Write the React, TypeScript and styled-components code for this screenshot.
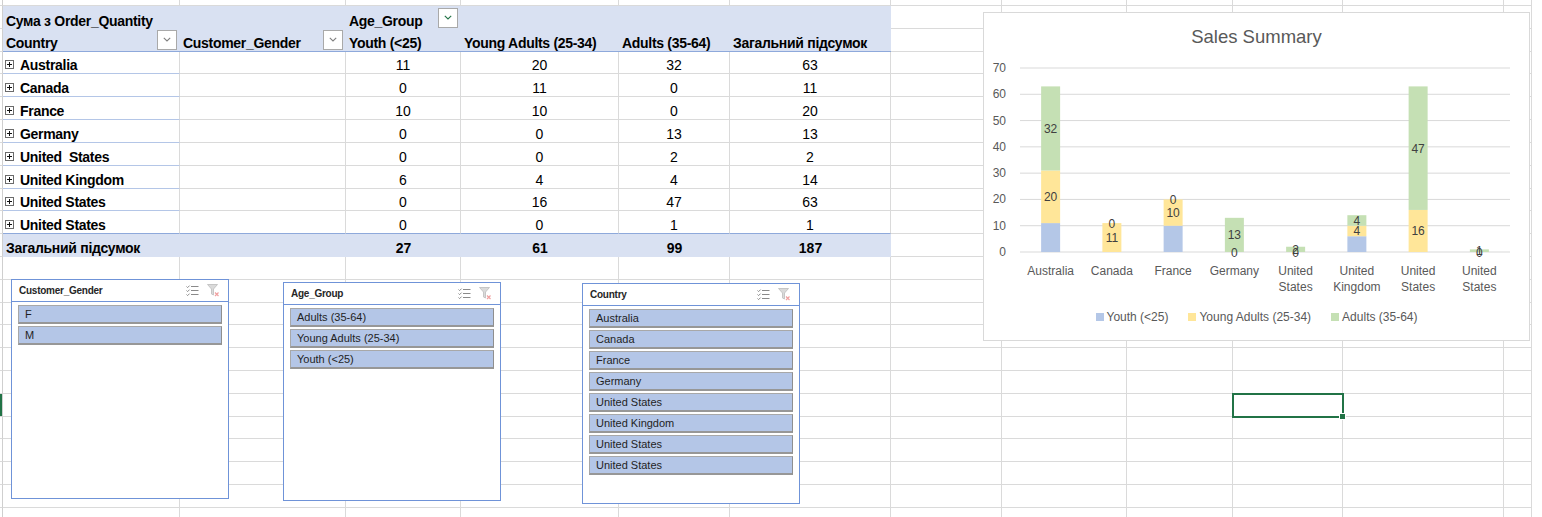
import React from 'react';
import styled, { createGlobalStyle, css } from 'styled-components';

const GlobalStyle = createGlobalStyle`
  html, body { margin: 0; padding: 0; background: #fff; }
  body { font-family: "Liberation Sans", Arial, sans-serif; }
  #root { width: 1542px; height: 517px; overflow: hidden; }
`;

const GRID = '#dadada';
const HEAD_BG = '#d9e1f2';
const HEAD_LINE = '#8ea9db';
const ROW_LINE = '#b4c6e7';
const SLICER_BLUE = '#6f93d8';

const COL_WIDTHS = [3, 177, 166, 115, 158, 111, 161, 111, 125, 106, 110, 161, 28];
const ROW_H = 22.82;

type PivotRow = { country: string; values: number[] };
const PIVOT: PivotRow[] = [
  { country: 'Australia', values: [11, 20, 32, 63] },
  { country: 'Canada', values: [0, 11, 0, 11] },
  { country: 'France', values: [10, 10, 0, 20] },
  { country: 'Germany', values: [0, 0, 13, 13] },
  { country: 'United  States', values: [0, 0, 2, 2] },
  { country: 'United Kingdom', values: [6, 4, 4, 14] },
  { country: 'United States', values: [0, 16, 47, 63] },
  { country: 'United States', values: [0, 0, 1, 1] },
];
const TOTALS = [27, 61, 99, 187];
const HEADERS = ['Youth (<25)', 'Young Adults (25-34)', 'Adults (35-64)', 'Загальний підсумок'];

/* ---------- sheet ---------- */

const Page = styled.div`
  position: relative;
  width: 1542px;
  height: 517px;
  overflow: hidden;
  background: #fff;
`;

const Sheet = styled.div`
  display: grid;
  grid-template-columns: ${COL_WIDTHS.map((w) => `${w}px`).join(' ')} 1fr;
  grid-template-rows: 6px repeat(22, ${ROW_H}px) 1fr;
  width: 100%;
  height: 100%;
  font-family: "Liberation Sans", Arial, sans-serif;
  font-size: 14px;
  line-height: 16px;
  color: #000;
`;

const Cell = styled.div<{ $noBottom?: boolean }>`
  box-sizing: border-box;
  min-width: 0;
  border-right: 1px solid ${GRID};
  border-bottom: ${(p) => (p.$noBottom ? 'none' : `1px solid ${GRID}`)};
`;

const EdgeCell = styled.div`
  background: #fff;
`;

const RowStub = styled(Cell)<{ $active?: boolean }>`
  border-right-color: #cfcfcf;
  background: ${(p) => (p.$active ? '#217346' : 'transparent')};
`;

const SelectedCell = styled(Cell)`
  position: relative;
  z-index: 1;
  outline: 2px solid #217346;
  outline-offset: -1px;
  &::after {
    content: '';
    position: absolute;
    right: -4px;
    bottom: -4px;
    width: 5px;
    height: 5px;
    background: #217346;
    border: 1px solid #fff;
  }
`;

const HeaderCell = styled.div<{ $span?: number; $underline?: boolean }>`
  box-sizing: border-box;
  min-width: 0;
  grid-column: span ${(p) => p.$span ?? 1};
  background: ${HEAD_BG};
  border-bottom: ${(p) => (p.$underline ? `1px solid ${HEAD_LINE}` : 'none')};
  display: flex;
  align-items: flex-end;
  justify-content: space-between;
  padding: 0 3px;
  font-weight: bold;
  letter-spacing: -0.3px;
  white-space: nowrap;
`;

const HeaderText = styled.span`
  padding-bottom: 0;
`;

const DropButton = styled.span`
  flex: none;
  width: 20px;
  height: 20px;
  box-sizing: border-box;
  margin-bottom: 1px;
  border: 1px solid #a9a9a9;
  background: #fff;
  display: inline-flex;
  align-items: center;
  justify-content: center;
`;

const RowLabelCell = styled.div<{ $last?: boolean }>`
  box-sizing: border-box;
  min-width: 0;
  border-right: 1px solid ${GRID};
  border-bottom: 1px solid ${(p) => (p.$last ? HEAD_LINE : ROW_LINE)};
  display: flex;
  align-items: flex-end;
  gap: 6px;
  padding-left: 2px;
  font-weight: bold;
  letter-spacing: -0.3px;
  white-space: pre;
`;

const ExpandBox = styled.span`
  flex: none;
  position: relative;
  width: 9px;
  height: 9px;
  box-sizing: border-box;
  margin-bottom: 4px;
  border: 1px solid #6b6b6b;
  &::before {
    content: '';
    position: absolute;
    left: 1px;
    right: 1px;
    top: 3px;
    height: 1px;
    background: #111;
  }
  &::after {
    content: '';
    position: absolute;
    top: 1px;
    bottom: 1px;
    left: 3px;
    width: 1px;
    background: #111;
  }
`;

const ValueCell = styled(Cell)<{ $last?: boolean }>`
  display: flex;
  align-items: flex-end;
  justify-content: center;
  ${(p) =>
    p.$last &&
    css`
      border-bottom-color: ${HEAD_LINE};
    `}
`;

const TotalCell = styled.div<{ $span?: number; $left?: boolean }>`
  box-sizing: border-box;
  min-width: 0;
  grid-column: span ${(p) => p.$span ?? 1};
  background: ${HEAD_BG};
  display: flex;
  align-items: flex-end;
  justify-content: ${(p) => (p.$left ? 'flex-start' : 'center')};
  padding-left: ${(p) => (p.$left ? '3px' : '0')};
  padding-bottom: 1px;
  font-weight: bold;
  letter-spacing: ${(p) => (p.$left ? '-0.3px' : '0')};
  white-space: nowrap;
`;

const Chevron = ({ color }: { color: string }) => (
  <svg width="8" height="5" viewBox="0 0 8 5">
    <path d="M0.8 0.8 L4 4 L7.2 0.8" fill="none" stroke={color} strokeWidth="1.1" />
  </svg>
);

/* ---------- slicers ---------- */

const Slicer = styled.div<{ $x: number; $y: number; $h: number }>`
  position: absolute;
  left: ${(p) => p.$x}px;
  top: ${(p) => p.$y}px;
  width: 218px;
  height: ${(p) => p.$h}px;
  box-sizing: border-box;
  background: #fff;
  border: 1px solid ${SLICER_BLUE};
  font-family: "Liberation Sans", Arial, sans-serif;
`;

const SlicerHeader = styled.div`
  height: 22px;
  box-sizing: border-box;
  border-bottom: 1px solid ${SLICER_BLUE};
  display: flex;
  align-items: center;
  justify-content: space-between;
  padding: 0 8px 0 7px;
`;

const SlicerTitle = styled.span`
  font-size: 10px;
  font-weight: bold;
  letter-spacing: -0.25px;
  color: #262626;
`;

const SlicerTools = styled.div`
  display: flex;
  align-items: center;
  gap: 8px;
`;

const SlicerList = styled.div`
  display: flex;
  flex-direction: column;
  gap: 2px;
  padding: 3px 6px 0;
`;

const SlicerItem = styled.div`
  height: 19px;
  box-sizing: border-box;
  display: flex;
  align-items: center;
  padding-left: 6px;
  background: #b4c6e7;
  border: 1px solid #a8a8a8;
  border-right-color: #8f8f8f;
  border-bottom: 2px solid #979797;
  font-size: 11px;
  color: #1f1f1f;
  white-space: nowrap;
`;

const MultiSelectIcon = () => (
  <svg width="13" height="12" viewBox="0 0 13 12">
    <g stroke="#8a8a8a" strokeWidth="1" fill="none">
      <path d="M0.5 1.5 L1.6 2.6 L3.6 0.6" />
      <path d="M5 1.5 H12.5" />
      <path d="M0.5 5.5 L1.6 6.6 L3.6 4.6" />
      <path d="M5 5.5 H12.5" />
      <path d="M0.5 9.5 L1.6 10.6 L3.6 8.6" />
      <path d="M5 9.5 H12.5" />
    </g>
  </svg>
);

const ClearFilterIcon = () => (
  <svg width="13" height="13" viewBox="0 0 13 13">
    <path d="M0.5 0.5 H10.5 L6.5 5 V11 L4.5 10 V5 Z" fill="#dadada" stroke="#c6c6c6" strokeWidth="1" />
    <path d="M8 8.5 L11.5 12 M11.5 8.5 L8 12" stroke="#f0a0a0" strokeWidth="1.2" />
  </svg>
);

type SlicerSpec = { title: string; x: number; y: number; h: number; items: string[] };
const SLICERS: SlicerSpec[] = [
  { title: 'Customer_Gender', x: 11, y: 279, h: 220, items: ['F', 'M'] },
  { title: 'Age_Group', x: 283, y: 282, h: 219, items: ['Adults (35-64)', 'Young Adults (25-34)', 'Youth (<25)'] },
  {
    title: 'Country',
    x: 582,
    y: 283,
    h: 221,
    items: ['Australia', 'Canada', 'France', 'Germany', 'United States', 'United Kingdom', 'United States', 'United States'],
  },
];

/* ---------- chart ---------- */

const ChartFrame = styled.div`
  position: absolute;
  left: 983px;
  top: 12px;
  width: 547px;
  height: 329px;
  box-sizing: border-box;
  border: 1px solid #d9d9d9;
  background: #fff;
  display: flex;
  flex-direction: column;
  font-family: "Liberation Sans", Arial, sans-serif;
`;

const ChartTitle = styled.div`
  height: 36px;
  box-sizing: border-box;
  padding-top: 13px;
  text-align: center;
  font-size: 18.5px;
  line-height: 22px;
  color: #595959;
`;

const Plot = styled.svg`
  display: block;
  flex: none;
`;

const AxisLabel = styled.text`
  font-family: "Liberation Sans", Arial, sans-serif;
  font-size: 12px;
  fill: #595959;
`;

const DataLabel = styled.text`
  font-family: "Liberation Sans", Arial, sans-serif;
  font-size: 12px;
  fill: #404040;
`;

const Legend = styled.div`
  display: flex;
  justify-content: center;
  gap: 20px;
  margin-top: 15px;
  font-size: 12px;
  line-height: 14px;
  color: #595959;
`;

const LegendItem = styled.div`
  display: flex;
  align-items: center;
  gap: 3px;
`;

const Swatch = styled.span<{ $color: string }>`
  width: 8px;
  height: 8px;
  background: ${(p) => p.$color};
`;

const SERIES = [
  { name: 'Youth (<25)', color: '#b4c7e7' },
  { name: 'Young Adults (25-34)', color: '#ffe699' },
  { name: 'Adults (35-64)', color: '#c5e0b4' },
];

const CHART_DATA: { label: string[]; v: number[] }[] = [
  { label: ['Australia'], v: [11, 20, 32] },
  { label: ['Canada'], v: [0, 11, 0] },
  { label: ['France'], v: [10, 10, 0] },
  { label: ['Germany'], v: [0, 0, 13] },
  { label: ['United', 'States'], v: [0, 0, 2] },
  { label: ['United', 'Kingdom'], v: [6, 4, 4] },
  { label: ['United', 'States'], v: [0, 16, 47] },
  { label: ['United', 'States'], v: [0, 0, 1] },
];

const PLOT_W = 545;
const PLOT_H = 246;
const X0 = 36;
const X1 = 526;
const Y0 = 203;
const SCALE = 184 / 70;
const CAT_W = (X1 - X0) / CHART_DATA.length;
const BAR_W = 19;

const SalesChart = () => {
  const ticks = [0, 10, 20, 30, 40, 50, 60, 70];
  return (
    <ChartFrame>
      <ChartTitle>Sales Summary</ChartTitle>
      <Plot width={PLOT_W} height={PLOT_H} viewBox={`0 0 ${PLOT_W} ${PLOT_H}`}>
        {ticks.map((t) => {
          const y = Y0 - t * SCALE;
          return (
            <g key={t}>
              <line x1={X0} x2={X1} y1={y} y2={y} stroke="#d9d9d9" strokeWidth="1" />
              <AxisLabel x={22} y={y} textAnchor="end" dominantBaseline="central">
                {t}
              </AxisLabel>
            </g>
          );
        })}
        {CHART_DATA.map((d, i) => {
          const cx = X0 + CAT_W * (i + 0.5);
          let acc = 0;
          const segs = d.v.map((val, s) => {
            const yTop = Y0 - (acc + val) * SCALE;
            const yBot = Y0 - acc * SCALE;
            acc += val;
            return { s, val, yTop, yBot };
          });
          return (
            <g key={i}>
              {segs.map((sg) =>
                sg.val > 0 ? (
                  <rect
                    key={sg.s}
                    x={cx - BAR_W / 2}
                    y={sg.yTop}
                    width={BAR_W}
                    height={sg.yBot - sg.yTop}
                    fill={SERIES[sg.s].color}
                  />
                ) : null,
              )}
              {segs
                .filter((sg) => sg.s > 0)
                .map((sg) => (
                  <DataLabel
                    key={`l${sg.s}`}
                    x={cx}
                    y={(sg.yTop + sg.yBot) / 2 + 0.5}
                    textAnchor="middle"
                    dominantBaseline="central"
                  >
                    {sg.val}
                  </DataLabel>
                ))}
              {d.label.map((line, li) => (
                <AxisLabel key={`x${li}`} x={cx} y={222 + li * 16} textAnchor="middle" dominantBaseline="central">
                  {line}
                </AxisLabel>
              ))}
            </g>
          );
        })}
      </Plot>
      <Legend>
        {SERIES.map((s) => (
          <LegendItem key={s.name}>
            <Swatch $color={s.color} />
            {s.name}
          </LegendItem>
        ))}
      </Legend>
    </ChartFrame>
  );
};

/* ---------- assemble sheet ---------- */

function buildSheet(): React.ReactNode[] {
  const out: React.ReactNode[] = [];
  for (let r = 0; r < 24; r++) {
    const lastRow = r === 23;
    out.push(<RowStub key={`s${r}`} $active={r === 18} $noBottom={lastRow} />);
    let start = 1;
    if (r === 1) {
      out.push(
        <HeaderCell key="h1a" $span={2}>
          <HeaderText>Сума з Order_Quantity</HeaderText>
        </HeaderCell>,
      );
      out.push(
        <HeaderCell key="h1b">
          <HeaderText>Age_Group</HeaderText>
          <DropButton>
            <Chevron color="#217346" />
          </DropButton>
        </HeaderCell>,
      );
      out.push(<HeaderCell key="h1c" $span={3} />);
      start = 7;
    } else if (r === 2) {
      out.push(
        <HeaderCell key="h2a" $underline>
          <HeaderText>Country</HeaderText>
          <DropButton>
            <Chevron color="#7f7f7f" />
          </DropButton>
        </HeaderCell>,
      );
      out.push(
        <HeaderCell key="h2b" $underline>
          <HeaderText>Customer_Gender</HeaderText>
          <DropButton>
            <Chevron color="#7f7f7f" />
          </DropButton>
        </HeaderCell>,
      );
      HEADERS.forEach((h, i) =>
        out.push(
          <HeaderCell key={`h2${i}`} $underline>
            <HeaderText>{h}</HeaderText>
          </HeaderCell>,
        ),
      );
      start = 7;
    } else if (r >= 3 && r <= 10) {
      const row = PIVOT[r - 3];
      const last = r === 10;
      out.push(
        <RowLabelCell key={`rl${r}`} $last={last}>
          <ExpandBox />
          {row.country}
        </RowLabelCell>,
      );
      out.push(<ValueCell key={`rg${r}`} $last={last} />);
      row.values.forEach((v, i) =>
        out.push(
          <ValueCell key={`rv${r}${i}`} $last={last}>
            {v}
          </ValueCell>,
        ),
      );
      start = 7;
    } else if (r === 11) {
      out.push(
        <TotalCell key="tl" $span={2} $left>
          Загальний підсумок
        </TotalCell>,
      );
      TOTALS.forEach((t, i) => out.push(<TotalCell key={`t${i}`}>{t}</TotalCell>));
      start = 7;
    }
    for (let c = start; c <= 12; c++) {
      if (r === 18 && c === 10) out.push(<SelectedCell key={`c${r}-${c}`} />);
      else out.push(<Cell key={`c${r}-${c}`} $noBottom={lastRow} />);
    }
    out.push(<EdgeCell key={`e${r}`} />);
  }
  return out;
}

export default function App() {
  return (
    <>
      <GlobalStyle />
      <Page>
        <Sheet>{buildSheet()}</Sheet>
        {SLICERS.map((s) => (
          <Slicer key={s.title} $x={s.x} $y={s.y} $h={s.h}>
            <SlicerHeader>
              <SlicerTitle>{s.title}</SlicerTitle>
              <SlicerTools>
                <MultiSelectIcon />
                <ClearFilterIcon />
              </SlicerTools>
            </SlicerHeader>
            <SlicerList>
              {s.items.map((it, i) => (
                <SlicerItem key={i}>{it}</SlicerItem>
              ))}
            </SlicerList>
          </Slicer>
        ))}
        <SalesChart />
      </Page>
    </>
  );
}
